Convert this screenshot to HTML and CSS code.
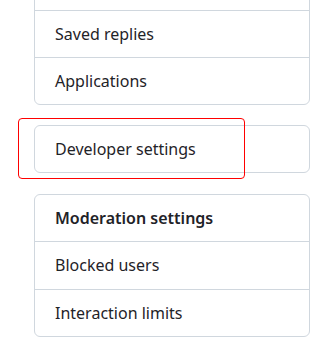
FILE: index.html
```html
<!DOCTYPE html>
<html lang="en">
<head>
    <meta charset="UTF-8">
    <meta name="viewport" content="width=device-width, initial-scale=1.0">
    <title>Settings menu</title>
    <link rel="stylesheet" href="styles.css">
</head>
<body>

    <div class="sidebar">
        <nav class="menu menu-first">
            <a class="menu-item" href="#">Emails</a>
            <a class="menu-item" href="#">Saved replies</a>
            <a class="menu-item" href="#">Applications</a>
        </nav>

        <nav class="menu menu-marked">
            <a class="menu-item" href="#">Developer settings</a>
            <span class="highlight"></span>
        </nav>

        <nav class="menu menu-last">
            <h3 class="menu-heading">Moderation settings</h3>
            <a class="menu-item" href="#">Blocked users</a>
            <a class="menu-item" href="#">Interaction limits</a>
        </nav>
    </div>

</body>
</html>
```

FILE: styles.css
```css
body {
    margin: 0;
    background-color: #ffffff;
    color: #1f2328;
    font-family: "Noto Sans", "Open Sans", Arial, sans-serif;
    font-size: 16px;
}
.sidebar {
    padding: 0 11px 0 34px;
}
.menu {
    border: 1px solid #d0d7de;
    border-radius: 6px;
    margin-bottom: 20px;
}
.menu-first {
    margin-top: -37px;
}
.menu-marked {
    position: relative;
    margin-bottom: 21px;
}
.menu-item,
.menu-heading {
    display: block;
    margin: 0;
    padding: 11px 20px;
    line-height: 24px;
    font-size: 16px;
    color: #1f2328;
    text-decoration: none;
    border-top: 1px solid #d0d7de;
}
.menu-last .menu-item {
    padding-bottom: 11.5px;
}
.menu-item:first-child,
.menu-heading:first-child {
    border-top: none;
}
.menu-heading {
    font-weight: 600;
}
/* red box drawn over the developer settings entry */
.highlight {
    position: absolute;
    left: -17px;
    top: -8px;
    width: 225px;
    height: 59px;
    border: 1px solid #ff0000;
    border-radius: 4px;
}
```
